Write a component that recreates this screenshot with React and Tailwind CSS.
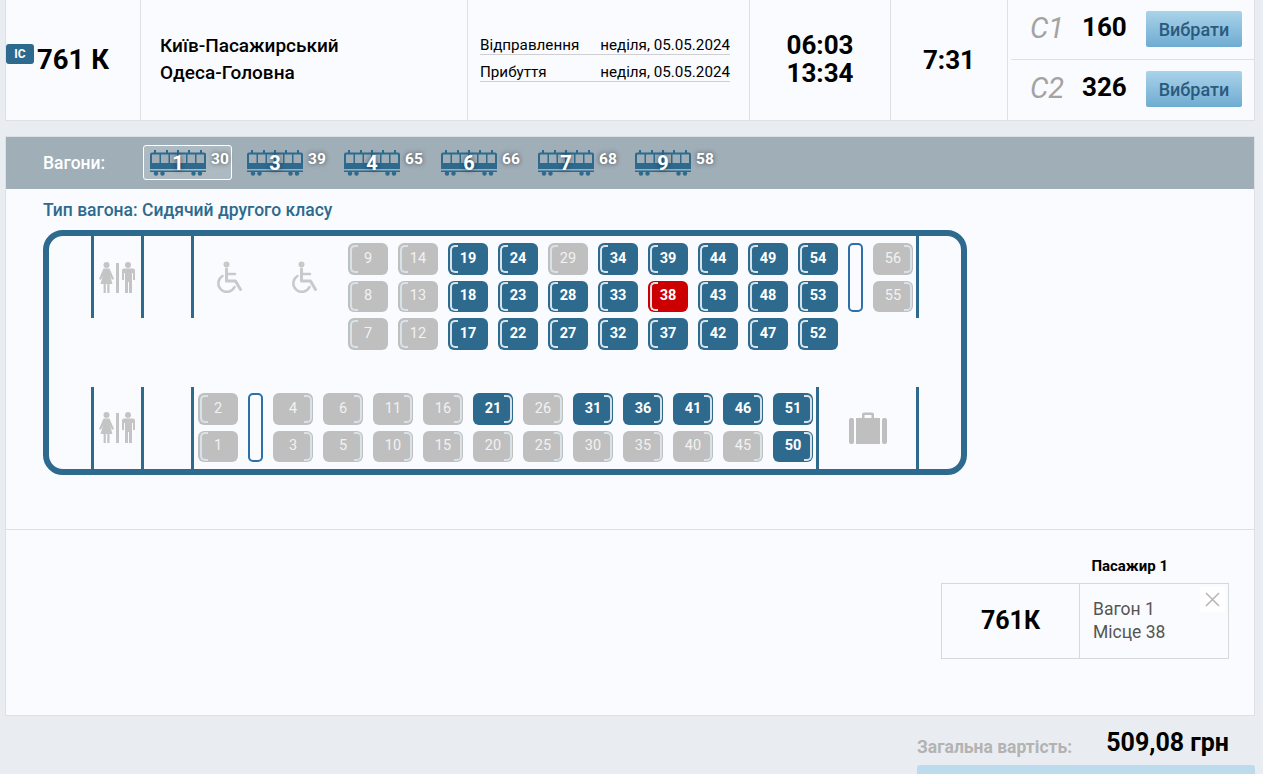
import React from "react";

const wagons = [
  { num: 1, free: 30, active: true },
  { num: 3, free: 39 },
  { num: 4, free: 65 },
  { num: 6, free: 66 },
  { num: 7, free: 68 },
  { num: 9, free: 58 },
];

// d = free seat, g = taken, r = selected
const topColumns = [
  [[9, "g"], [8, "g"], [7, "g"]],
  [[14, "g"], [13, "g"], [12, "g"]],
  [[19, "d"], [18, "d"], [17, "d"]],
  [[24, "d"], [23, "d"], [22, "d"]],
  [[29, "g"], [28, "d"], [27, "d"]],
  [[34, "d"], [33, "d"], [32, "d"]],
  [[39, "d"], [38, "r"], [37, "d"]],
  [[44, "d"], [43, "d"], [42, "d"]],
  [[49, "d"], [48, "d"], [47, "d"]],
  [[54, "d"], [53, "d"], [52, "d"]],
];

const bottomColumns = [
  [[4, "g"], [3, "g"]],
  [[6, "g"], [5, "g"]],
  [[11, "g"], [10, "g"]],
  [[16, "g"], [15, "g"]],
  [[21, "d"], [20, "g"]],
  [[26, "g"], [25, "g"]],
  [[31, "d"], [30, "g"]],
  [[36, "d"], [35, "g"]],
  [[41, "d"], [40, "g"]],
  [[46, "d"], [45, "g"]],
  [[51, "d"], [50, "d"]],
];

const TrainIcon = () => (
  <svg width="56" height="26" viewBox="0 0 56 26" className="block">
    <g fill="#2d6a8e">
      <rect x="4" y="0" width="2" height="4" />
      <rect x="16" y="0" width="2" height="4" />
      <rect x="27" y="0" width="2" height="4" />
      <rect x="38" y="0" width="2" height="4" />
      <rect x="50" y="0" width="2" height="4" />
      <path d="M2 2.500h52a2 2 0 0 1 2 2V19H0V4.500a2 2 0 0 1 2-2z" />
      <rect x="0" y="20.500" width="56" height="1.500" />
      <circle cx="6" cy="23.500" r="2.200" />
      <circle cx="12.500" cy="23.500" r="2.200" />
      <circle cx="43.500" cy="23.500" r="2.200" />
      <circle cx="50" cy="23.500" r="2.200" />
    </g>
    <g fill="#a0aeb8">
      <rect x="2" y="4.500" width="7.500" height="8.500" />
      <rect x="11" y="4.500" width="7.500" height="8.500" />
      <rect x="20" y="4.500" width="7" height="8.500" />
      <rect x="28.500" y="4.500" width="7.500" height="8.500" />
      <rect x="37.500" y="4.500" width="7.500" height="8.500" />
      <rect x="46.500" y="4.500" width="7.500" height="8.500" />
    </g>
  </svg>
);

const WcIcon = () => (
  <svg width="37" height="32" viewBox="0 0 37 32" fill="#c4c4c4" className="block">
    <circle cx="7.500" cy="3" r="3" />
    <path d="M4.500 6.500h6L15 17l-2 .7-2-4.200L13.500 22H10.500v9H8.300v-9H6.800v9H4.600v-9H1.500L4 13.500 2 17.700 0 17z" />
    <rect x="17" y="1" width="3" height="30" />
    <circle cx="29" cy="3" r="3" />
    <path d="M24 6.500h10a2 2 0 0 1 2 2V18h-2v-7h-1v20h-3V20h-1v11h-3V11h-1v7h-2V8.500a2 2 0 0 1 2-2z" />
  </svg>
);

const WheelchairIcon = () => (
  <svg width="30" height="32" viewBox="0 0 30 32" fill="none" className="block">
    <circle cx="11.500" cy="3.500" r="3" fill="#c9c9c9" />
    <path d="M11.500 8v12h9l5 8.500" stroke="#c9c9c9" strokeWidth="3" strokeLinecap="round" strokeLinejoin="round" />
    <path d="M12 13h8" stroke="#c9c9c9" strokeWidth="2.500" strokeLinecap="round" />
    <path d="M7.500 15a8.500 8.500 0 1 0 12 11" stroke="#c9c9c9" strokeWidth="2.500" strokeLinecap="round" />
  </svg>
);

const LuggageIcon = () => (
  <svg width="38" height="32" viewBox="0 0 38 32" fill="#bfbfbf" className="block">
    <path d="M13 6V2.500A2 2 0 0 1 15 .5h8a2 2 0 0 1 2 2V6h-2.500V3h-7v3z" />
    <rect x="0" y="6" width="5" height="26" rx="2" />
    <rect x="7" y="6" width="24" height="26" />
    <rect x="33" y="6" width="5" height="26" rx="2" />
  </svg>
);

const Seat = ({ num, state, side }) => {
  const bg = state === "d" ? "bg-[#2d6a8e] text-white font-bold" : state === "r" ? "bg-[#cc0000] text-white font-bold" : "bg-[#bfbfbf] text-[#f2f2f2]";
  return (
    <div className={`relative w-10 h-[31.5px] rounded-[6px] flex items-center justify-center text-[14.500px] ${bg}`}>
      {num}
      {side === "l" && <span className="absolute left-[1.500px] top-[1.500px] bottom-[1.500px] w-[8px] border-2 border-r-0 border-[#d7e2e9] rounded-l-[5px]" />}
      {side === "r" && <span className="absolute right-[1.500px] top-[1.500px] bottom-[1.500px] w-[8px] border-2 border-l-0 border-[#d7e2e9] rounded-r-[5px]" />}
    </div>
  );
};

const SeatColumn = ({ seats, side, className = "" }) => (
  <div className={`flex flex-col gap-[6px] shrink-0 ${className}`}>
    {seats.map(([num, state]) => (
      <Seat key={num} num={num} state={state} side={side} />
    ))}
  </div>
);

const Divider = () => <div className="w-[3px] h-[82px] bg-[#2d6a8e] shrink-0" />;

const Slot = ({ className = "" }) => <div className={`w-[15px] rounded-[5px] border-2 border-[#2e6fa8] shrink-0 ${className}`} />;

const ClassRow = ({ name, seats, className = "" }) => (
  <div className={`flex items-center ml-[3px] pl-[19px] ${className}`}>
    <span className="w-[52px] text-[29px] italic text-[#a3a3a3]">{name}</span>
    <span className="w-[64px] -mt-[3px] text-[26px] font-bold text-black">{seats}</span>
    <button className="w-[96px] h-9 rounded-[2px] bg-gradient-to-b from-[#a9d3ea] to-[#6fabd1] text-[18px] font-medium text-[#2b5a7d]">Вибрати</button>
  </div>
);

export default function App() {
  return (
    <div className="h-[774px] w-full overflow-hidden bg-[#e9edf1] pl-[5px] pr-[8px] font-['Roboto',sans-serif]">
      {/* Train info */}
      <div className="flex h-[121px] border border-t-0 border-[#dde1e6] bg-[#fafbfe] text-black">
        <div className="flex items-center w-[135px] shrink-0 border-r border-[#dde1e6]">
          <span className="mb-[12px] flex h-5 w-[28px] items-center justify-center rounded-[3px] bg-[#2d6a8e] text-[12px] font-bold text-white">IC</span>
          <span className="ml-[3px] text-[27.500px] font-bold">761 К</span>
        </div>
        <div className="flex flex-col justify-center w-[327px] shrink-0 border-r border-[#dde1e6] pl-[19px] pb-[3px] text-[19px] font-medium leading-[27px]">
          <div>Київ-Пасажирський</div>
          <div>Одеса-Головна</div>
        </div>
        <div className="flex flex-col justify-center w-[282px] shrink-0 border-r border-[#dde1e6] pl-[12px] pr-[19px] pb-[10px] text-[15.200px] leading-[18px]">
          <div className="flex justify-between h-[27px] items-end border-b border-[#cfcfcf]">
            <span>Відправлення</span>
            <span>неділя, 05.05.2024</span>
          </div>
          <div className="flex justify-between h-[27px] items-end border-b border-[#cfcfcf]">
            <span>Прибуття</span>
            <span>неділя, 05.05.2024</span>
          </div>
        </div>
        <div className="flex flex-col justify-center items-center w-[141px] shrink-0 border-r border-[#dde1e6] pb-[2px] text-[26px] font-bold leading-[28px]">
          <div>06:03</div>
          <div>13:34</div>
        </div>
        <div className="flex justify-center items-center w-[117px] shrink-0 border-r border-[#dde1e6] text-[26px] font-bold">7:31</div>
        <div className="flex-1">
          <ClassRow name="С1" seats="160" className="h-[60px] pb-[1px] border-b border-[#dde1e6]" />
          <ClassRow name="С2" seats="326" className="h-[58px]" />
        </div>
      </div>

      {/* Wagon scheme */}
      <div className="mt-[15px] h-[580px] border border-[#dde1e6] bg-[#fafbfe]">
        <div className="flex items-center h-[52px] bg-[#a0aeb8] pl-[37px]">
          <span className="w-[100px] shrink-0 pt-[1px] text-[17.500px] font-medium text-white">Вагони:</span>
          <div className="flex gap-2 -mt-[1px]">
            {wagons.map((w) => (
              <div key={w.num} className={`relative flex w-[89px] h-[35px] items-center pl-[6px] rounded-[3px] border ${w.active ? "border-white bg-white/15" : "border-transparent"}`}>
                <TrainIcon />
                <span className="absolute left-[6px] w-14 text-center text-[20px] font-bold text-white top-[2px] [text-shadow:0_0_5px_rgba(20,50,70,0.9)]">{w.num}</span>
                <span className="ml-[5px] -mt-[5px] text-[15.500px] font-bold text-white [text-shadow:0_0_5px_rgba(0,0,0,0.6)]">{w.free}</span>
              </div>
            ))}
          </div>
        </div>

        <div className="h-[341px] border-b border-[#dde1e6] pl-[37px] pt-[12px]">
          <div className="text-[17.500px] font-medium leading-[19px] text-[#2d6a8e]">Тип вагона: Сидячий другого класу</div>
          <div className="mt-[10px] flex h-[245px] w-[924px] flex-col justify-between rounded-[20px] border-[6px] border-[#2d6a8e]">
            {/* top row */}
            <div className="flex items-start pl-[42px]">
              <Divider />
              <div className="flex h-[82px] w-[47px] shrink-0 justify-center pt-[26px]"><WcIcon /></div>
              <Divider />
              <div className="w-[47px] shrink-0" />
              <Divider />
              <div className="flex w-[71px] shrink-0 justify-center pt-[25px] pl-[1px]"><WheelchairIcon /></div>
              <div className="flex w-[79px] shrink-0 justify-center pt-[25px]"><WheelchairIcon /></div>
              <div className="flex gap-[10px] pt-[7px] ml-[4px]">
                {topColumns.map((col) => (
                  <SeatColumn key={col[0][0]} seats={col} side="l" />
                ))}
                <Slot className="h-[69px]" />
                <SeatColumn seats={[[56, "g"], [55, "g"]]} side="r" />
              </div>
              <div className="ml-[3px]"><Divider /></div>
            </div>
            {/* bottom row */}
            <div className="flex items-start pl-[42px]">
              <Divider />
              <div className="flex h-[82px] w-[47px] shrink-0 justify-center pt-[25px]"><WcIcon /></div>
              <Divider />
              <div className="w-[47px] shrink-0" />
              <Divider />
              <div className="flex gap-[10px] pt-[6px] ml-1">
                <SeatColumn seats={[[2, "g"], [1, "g"]]} side="l" />
                <Slot className="h-[69px]" />
                {bottomColumns.map((col) => (
                  <SeatColumn key={col[0][0]} seats={col} side="r" />
                ))}
              </div>
              <div className="ml-[3px]"><Divider /></div>
              <div className="flex w-[97px] shrink-0 justify-center pt-[25px]"><LuggageIcon /></div>
              <Divider />
            </div>
          </div>
        </div>

        {/* Passenger */}
        <div className="flex justify-end pr-[25px]">
          <div className="w-[288px] pt-[27px]">
            <div className="pr-[61px] text-right text-[15px] font-bold leading-[19px] text-black">Пасажир 1</div>
            <div className="mt-[7px] flex h-[76px] border border-[#d5d9de]">
              <div className="flex w-[138px] shrink-0 items-center justify-center border-r border-[#d5d9de] text-[25px] font-bold text-black">761К</div>
              <div className="relative flex-1 pl-[13px] pt-[14px] text-[17.500px] leading-[23px] text-[#555]">
                <div>Вагон 1</div>
                <div>Місце 38</div>
                <button className="absolute right-[3px] top-[3px] flex h-[25px] w-[25px] items-center justify-center bg-white">
                  <svg width="15" height="15" viewBox="0 0 15 15" stroke="#b5b5b5" strokeWidth="1.500">
                    <path d="M1 1l13 13M14 1L1 14" />
                  </svg>
                </button>
              </div>
            </div>
          </div>
        </div>
      </div>

      {/* Total */}
      <div className="flex justify-end">
        <div className="w-[338px]">
          <div className="flex items-start h-[49px] pr-[26px] pt-[13px]">
            <span className="mt-[9px] text-[17.500px] font-bold leading-[19px] text-[#b3b3b3]">Загальна вартість:</span>
            <span className="ml-auto text-[25px] font-bold leading-[28px] text-black">509,08 грн</span>
          </div>
          <div className="h-10 rounded-t-[3px] bg-[#bcdcee]" />
        </div>
      </div>
    </div>
  );
}
